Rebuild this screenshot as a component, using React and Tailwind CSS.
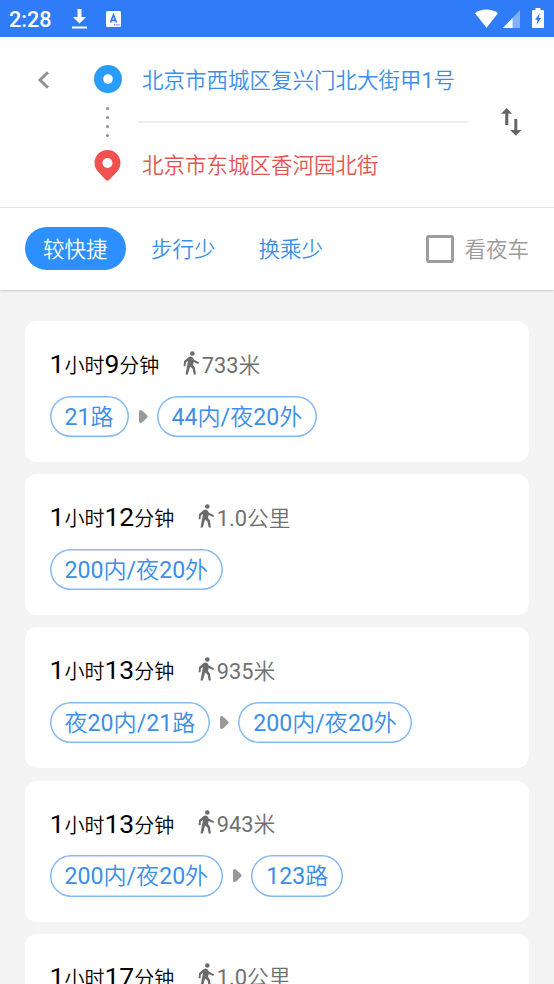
const routes = [
  { time: ['1', '小时', '9', '分钟'], walk: '733米', lines: ['21路', '44内/夜20外'] },
  { time: ['1', '小时', '12', '分钟'], walk: '1.0公里', lines: ['200内/夜20外'] },
  { time: ['1', '小时', '13', '分钟'], walk: '935米', lines: ['夜20内/21路', '200内/夜20外'] },
  { time: ['1', '小时', '13', '分钟'], walk: '943米', lines: ['200内/夜20外', '123路'] },
  { time: ['1', '小时', '17', '分钟'], walk: '1.0公里', lines: ['200内/夜20外'] },
];

function StatusBar() {
  return (
    <header className="flex h-[37px] shrink-0 items-center bg-[#307cf8] pl-[9px] pr-[10px] text-white">
      <span className="w-[63px] pt-[2px] text-[21.7px] font-medium leading-[35px]">2:28</span>
      <svg className="h-[22px] w-[15px]" viewBox="0 0 15 22" fill="currentColor">
        <path d="M5.500 1h4v8H14l-6.500 6.500L1 9h4.500zM0 18.500h15v2H0z" />
      </svg>
      <svg className="ml-[19px] h-[16px] w-[15px]" viewBox="0 0 15 16">
        <rect width="15" height="16" rx="1.500" fill="#fff" />
        <path d="M4.500 11.500 7.500 4l3 7.500M5.600 9.300h3.800" fill="none" stroke="#307cf8" strokeWidth="1.700" />
        <path d="M8 13.300h1.200v1.200H8zM10.200 13.300h1.200v1.200h-1.200zM12.300 13.300h1.200v1.200h-1.200z" fill="#307cf8" />
      </svg>
      <svg className="ml-auto h-[19px] w-[23px]" viewBox="0 0 23 19" fill="currentColor">
        <path d="M0 4.200C3 1.800 7 .5 11.500.5S20 1.800 23 4.200L11.500 18.700z" />
      </svg>
      <svg className="ml-[5px] mt-px h-[18px] w-[17px]" viewBox="0 0 17 18" fill="currentColor">
        <path d="M17 0v18H0z" opacity=".4" />
        <path d="M9.500 8v10H0z" />
      </svg>
      <svg className="-mt-px ml-[12px] h-[20px] w-[12px]" viewBox="0 0 12 20">
        <path d="M3.500 0h5v2H11a1 1 0 0 1 1 1v16a1 1 0 0 1-1 1H1a1 1 0 0 1-1-1V3a1 1 0 0 1 1-1h2.500z" fill="#fff" />
        <path d="M7.800 5 3 11.800h2.500L4.500 17 9.200 9.900H6.800z" fill="#307cf8" />
      </svg>
    </header>
  );
}

function RouteHeader() {
  return (
    <section className="flex h-[171px] shrink-0 border-b border-[#e8e8e8] bg-white">
      <button className="ml-[37px] mt-[33.5px] h-[18px] w-[13px]" aria-label="返回">
        <svg className="h-[18px] w-[13px]" viewBox="0 0 13 18" fill="none" stroke="#929292" strokeWidth="3">
          <path d="M11 1.200 3 9l8 7.800" />
        </svg>
      </button>
      <div className="ml-[43px] flex w-[29px] flex-col items-center pt-[28px]">
        <svg className="h-[28px] w-[28px]" viewBox="0 0 28 28">
          <circle cx="14" cy="14" r="14" fill="#289dff" />
          <circle cx="14" cy="14" r="4.800" fill="#fff" />
        </svg>
        <div className="mt-[14px] flex h-[30px] flex-col justify-between">
          <i className="size-[3px] rounded-full bg-[#8f8f8f]" />
          <i className="size-[3px] rounded-full bg-[#8f8f8f]" />
          <i className="size-[3px] rounded-full bg-[#8f8f8f]" />
          <i className="size-[3px] rounded-full bg-[#8f8f8f]" />
        </div>
        <svg className="mt-[12.500px] h-[31px] w-[27px] shrink-0" viewBox="0 0 27 31">
          <path d="M13.500 0C6 0 .5 5.800.5 13c0 4.200 2.200 7.800 5.200 10.500l6 6.300q1.800 1.800 3.600 0l6-6.300c3-2.700 5.200-6.300 5.200-10.500C26.500 5.800 21 0 13.500 0z" fill="#f0524f" />
          <circle cx="13.500" cy="13" r="5" fill="#fff" />
        </svg>
      </div>
      <div className="ml-[16px] w-[330px] text-[21.5px] leading-[30px]">
        <p className="mt-[29px] whitespace-nowrap pl-[4px] text-[#3b8ee9]">北京市西城区复兴门北大街甲1号</p>
        <div className="mt-[25px] h-[2px] bg-[#eeeeee]" />
        <p className="mt-[28px] whitespace-nowrap pl-[4px] text-[#e35552]">北京市东城区香河园北街</p>
      </div>
      <button className="ml-[32.5px] mt-[71px] h-[28px] w-[21px]" aria-label="交换">
        <svg className="h-[28px] w-[21px]" viewBox="0 0 21 28" fill="#666">
          <path d="M5.700 0 11 5.700H7.300V17H4.200V5.700H0zM13.300 11h3v11H20.500l-5.600 5.700L9 22h4.300z" />
        </svg>
      </button>
    </section>
  );
}

function SortBar() {
  return (
    <nav className="z-10 flex h-[82px] shrink-0 items-center bg-white pl-[24.5px] pr-[25px] text-[21.5px] shadow-[0_1px_2px_rgba(0,0,0,0.18)]">
      <button className="mb-px flex h-[43px] w-[101.5px] items-center justify-center rounded-full bg-[#2e90ff] pt-[3px] text-white">较快捷</button>
      <button className="ml-[25px] pt-[3px] text-[#3b8ee9]">步行少</button>
      <button className="ml-[43px] pt-[3px] text-[#3b8ee9]">换乘少</button>
      <label className="ml-auto flex items-center text-[#9b9b9b]">
        <span className="mr-[10px] size-[28px] rounded-[3px] border-[3px] border-[#9c9c9c]" />
        <span className="pt-[3px]">看夜车</span>
      </label>
    </nav>
  );
}

function Walker() {
  return (
    <svg className="mb-[5px] h-[24px] w-[17px]" viewBox="0 0 17 24" fill="#6b6b6b">
      <circle cx="9.300" cy="2.500" r="2.300" />
      <path d="M5.800 5.900Q7.600 5.300 9 5.900 10.100 6.500 10.900 8.700L16 11.200 15.300 12.900 10.700 11 10 14l1.900 2.500 1 7H10.700l-1.100-5.800L7.100 15.400 4.800 23.500H2.500L5 10 2.900 11.500 2.500 15.200H.6L1.100 10z" />
    </svg>
  );
}

function RouteCard({ time, walk, lines }) {
  return (
    <article className="h-[141px] shrink-0 rounded-[12px] bg-white pl-[25px] pt-[27px]">
      <div className="flex h-[34px] items-center">
        <p className="flex items-baseline whitespace-nowrap leading-[34px] text-black">
          <span className="text-[26.5px]">{time[0]}</span>
          <span className="text-[20px]">{time[1]}</span>
          <span className="text-[26.5px]">{time[2]}</span>
          <span className="text-[20px]">{time[3]}</span>
        </p>
        <div className="ml-[23.5px] flex items-center text-[21.8px] leading-[32px] text-[#707070]">
          <Walker />
          <span className="ml-[2px] pt-px">{walk}</span>
        </div>
      </div>
      <div className="mt-[13.5px] flex items-center">
        {lines.map((line, i) => (
          <div key={i} className="flex items-center">
            {i > 0 && (
              <svg className="ml-[10px] mr-[9px] h-[13px] w-[9px]" viewBox="0 0 9 13" fill="#999">
                <path d="M0 1.500Q0 0 1.500 0 3 0 8.200 5.500q.8 1 0 2Q3 13 1.500 13 0 13 0 11.500z" />
              </svg>
            )}
            <span className="flex h-[41.5px] items-center whitespace-nowrap rounded-full px-[15px] pt-[4px] text-[23.1px] text-[#3b8ee9] shadow-[inset_0_0_0_1.5px_#86b9f4]">{line}</span>
          </div>
        ))}
      </div>
    </article>
  );
}

export default function App() {
  return (
    <div className="flex h-[984px] w-[554px] flex-col overflow-hidden bg-[#f4f4f4] font-['Roboto','Noto_Sans_CJK_SC_DemiLight','Noto_Sans_CJK_SC_Light','Noto_Sans_CJK_SC',sans-serif]">
      <StatusBar />
      <RouteHeader />
      <SortBar />
      <main className="flex min-h-0 flex-1 flex-col gap-[12.2px] overflow-hidden pl-[24.5px] pr-[25px] pt-[31px]">
        {routes.map((route, i) => (
          <RouteCard key={i} {...route} />
        ))}
      </main>
    </div>
  );
}
